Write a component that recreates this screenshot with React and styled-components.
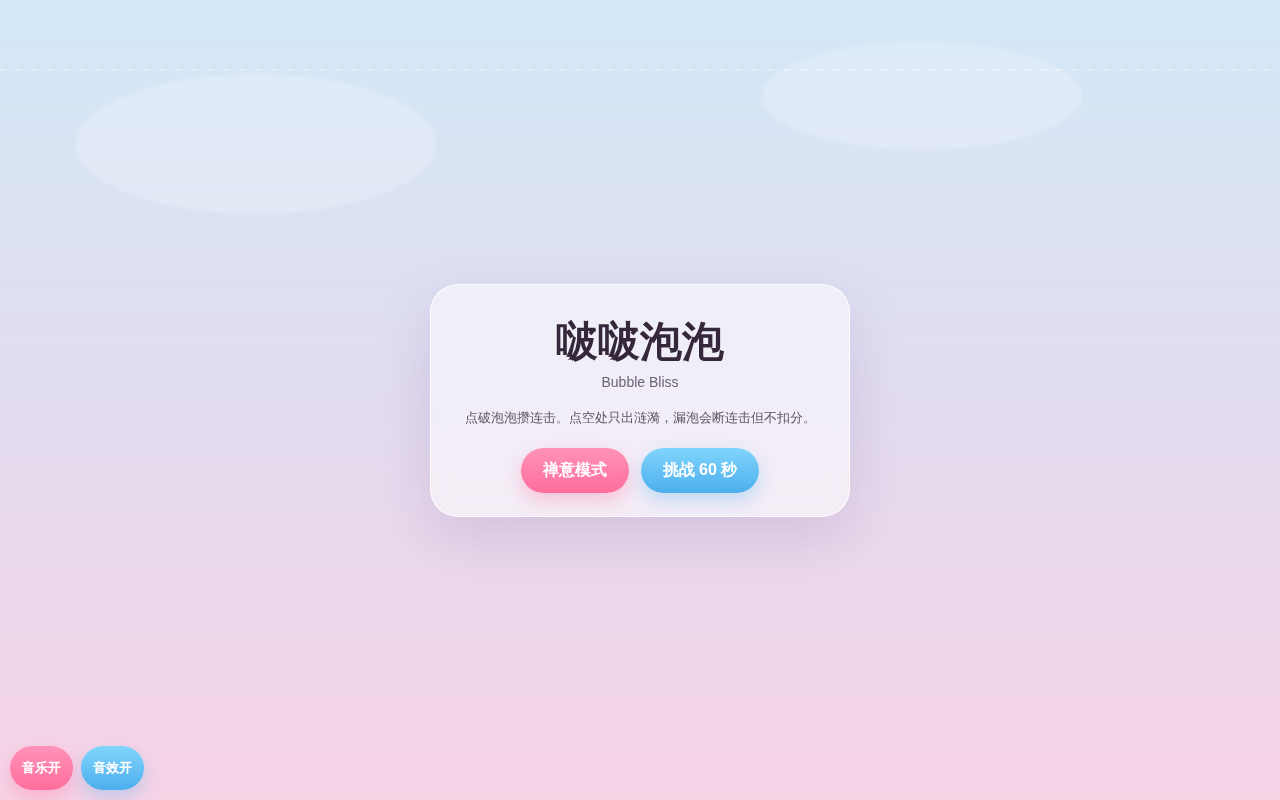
import React from 'react';
import styled, { createGlobalStyle } from 'styled-components';

const GlobalStyle = createGlobalStyle`
  html, body, #root {
    margin: 0;
    height: 100%;
  }
  body {
    font-family: "Liberation Sans", sans-serif;
    overflow: hidden;
  }
`;

const Stage = styled.div`
  position: relative;
  width: 100%;
  height: 100vh;
  overflow: hidden;
  display: flex;
  align-items: center;
  justify-content: center;
  background: linear-gradient(180deg, #d3e8f7 0%, #e2dcef 50%, #f7d3e6 100%);
`;

const Cloud = styled.div`
  position: absolute;
  left: ${(p) => p.$x}px;
  top: ${(p) => p.$y}px;
  width: ${(p) => p.$w}px;
  height: ${(p) => p.$h}px;
  border-radius: 50%;
  background: rgba(255, 255, 255, 0.23);
  filter: blur(1.5px);
`;

const Dashes = styled.div`
  position: absolute;
  left: 0;
  right: 0;
  top: 69px;
  height: 2px;
  background: repeating-linear-gradient(
    90deg,
    rgba(255, 255, 255, 0.35) 0 6px,
    transparent 6px 16px
  );
`;

const Card = styled.div`
  position: relative;
  z-index: 2;
  width: 420px;
  box-sizing: border-box;
  padding: 32px 34px 23px;
  border-radius: 28px;
  border: 1px solid rgba(255, 255, 255, 0.85);
  background: rgba(255, 255, 255, 0.5);
  box-shadow: 0 22px 55px rgba(130, 100, 170, 0.2);
  backdrop-filter: blur(8px);
  text-align: center;
`;

const Title = styled.h1`
  margin: 0;
  font-size: 42px;
  line-height: 50px;
  font-weight: 700;
  color: #35283a;
`;

const Subtitle = styled.div`
  margin-top: 5px;
  font-size: 14px;
  line-height: 20px;
  color: #6b6274;
`;

const Desc = styled.p`
  margin: 16px 0 0;
  font-size: 13px;
  line-height: 20px;
  color: #5e5565;
  white-space: nowrap;
`;

const Actions = styled.div`
  display: flex;
  justify-content: center;
  gap: 12px;
  margin-top: 20px;
`;

const Pill = styled.button`
  border: none;
  height: ${(p) => (p.$small ? 44 : 45)}px;
  padding: 0 ${(p) => (p.$small ? 12 : 22)}px;
  border-radius: 999px;
  font-family: inherit;
  font-size: ${(p) => (p.$small ? 13 : 16)}px;
  font-weight: 700;
  color: #fff;
  cursor: pointer;
  background: ${(p) =>
    p.$tone === 'pink'
      ? 'linear-gradient(180deg, #ff92b8 0%, #ff6d9c 100%)'
      : 'linear-gradient(180deg, #80d5fb 0%, #4daeee 100%)'};
  box-shadow: ${(p) =>
    p.$tone === 'pink'
      ? '0 8px 18px rgba(255, 110, 158, 0.32)'
      : '0 8px 18px rgba(77, 174, 238, 0.3)'};
`;

const Toggles = styled.div`
  position: absolute;
  left: 10px;
  bottom: 10px;
  z-index: 3;
  display: flex;
  gap: 8px;
`;

export default function App() {
  return (
    <>
      <GlobalStyle />
      <Stage>
        <Cloud $x={76} $y={74} $w={360} $h={140} />
        <Cloud $x={762} $y={42} $w={320} $h={108} />
        <Dashes />
        <Card>
          <Title>啵啵泡泡</Title>
          <Subtitle>Bubble Bliss</Subtitle>
          <Desc>点破泡泡攒连击。点空处只出涟漪，漏泡会断连击但不扣分。</Desc>
          <Actions>
            <Pill $tone="pink">禅意模式</Pill>
            <Pill $tone="blue">挑战 60 秒</Pill>
          </Actions>
        </Card>
        <Toggles>
          <Pill $small $tone="pink">音乐开</Pill>
          <Pill $small $tone="blue">音效开</Pill>
        </Toggles>
      </Stage>
    </>
  );
}
